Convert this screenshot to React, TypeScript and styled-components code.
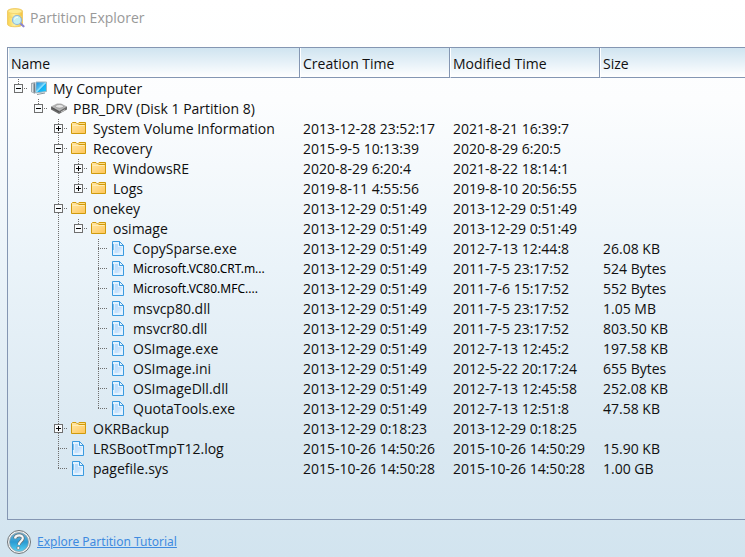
import React, { useState } from "react";
import styled, { createGlobalStyle } from "styled-components";

const GlobalStyle = createGlobalStyle`
  *, *::before, *::after { box-sizing: border-box; }
  body {
    margin: 0;
    background: #d3e5ef;
    font-family: "Open Sans", "Noto Sans", sans-serif;
    color: #101010;
  }
`;

const LINE = "#8496b2";
const DOT = "#6e6e6e";

const Page = styled.main`
  display: flex;
  flex-direction: column;
  min-height: 100vh;
  padding-left: 7px;
  background: linear-gradient(#ffffff 0%, #fcfdfe 18%, #eaf3f9 48%, #dbe9f2 78%, #d2e4ef 100%);
  overflow: hidden;
`;

const TitleBar = styled.header`
  display: flex;
  align-items: center;
  gap: 5px;
  height: 47px;
  padding-bottom: 11px;
`;

const Title = styled.h1`
  margin: 0;
  font-size: 14px;
  line-height: 20px;
  font-weight: 400;
  color: #999999;
`;

const Panel = styled.section`
  flex: 1;
  border: 1px solid ${LINE};
  border-right: 0;
`;

const Grid = styled.table`
  width: 100%;
  table-layout: fixed;
  border-collapse: separate;
  border-spacing: 0;
  font-size: 14px;
  line-height: 20px;
`;

const Column = styled.col<{ $width?: number }>`
  width: ${(p) => (p.$width ? `${p.$width}px` : "auto")};
`;

const HeadCell = styled.th`
  height: 30px;
  padding: 2px 0 0 2px;
  text-align: left;
  font-weight: 400;
  background: linear-gradient(#d0e4f0, #e6f1f8 50%, #ffffff);
  border-bottom: 1px solid ${LINE};
  border-left: 1px solid #ffffff;
  border-right: 1px solid ${LINE};

  &:last-child { border-right: 0; }
`;

const Body = styled.tbody`
  &::before {
    content: "";
    display: table-row;
    height: 1px;
  }
`;

const Cell = styled.td`
  height: 20px;
  padding: 0 0 0 3px;
  white-space: nowrap;
`;

const NameCell = styled.td`
  height: 20px;
  padding: 0;
`;

const NameLine = styled.div`
  display: flex;
  align-items: center;
  height: 20px;
  white-space: nowrap;
`;

const vertical = `repeating-linear-gradient(${DOT} 0 1px, transparent 1px 2px)`;
const horizontal = `repeating-linear-gradient(90deg, ${DOT} 0 1px, transparent 1px 2px)`;

const Guide = styled.span<{ $line: boolean }>`
  flex: none;
  width: 20px;
  height: 20px;
  background: ${(p) => (p.$line ? `${vertical} 10px 0 / 1px 20px no-repeat` : "none")};
`;

const Branch = styled.span<{ $last: boolean }>`
  display: flex;
  flex: none;
  justify-content: center;
  width: 20px;
  height: 20px;
  padding: 5px 0 6px 1px;
  background:
    ${vertical} 10px 0 / 1px ${(p) => (p.$last ? 10 : 20)}px no-repeat,
    ${horizontal} 10px 9px / 10px 1px no-repeat;
`;

const Toggle = styled.button`
  display: block;
  width: 9px;
  height: 9px;
  padding: 0;
  border: 0;
  background: none;
  cursor: pointer;

  svg { display: block; }
`;

const IconSlot = styled.span`
  display: flex;
  flex: none;
  justify-content: center;
  width: 22px;
  margin-right: 3px;
  padding-bottom: 2px;
`;

const Label = styled.span<{ $small?: boolean }>`
  font-size: ${(p) => (p.$small ? 12 : 14)}px;
  font-family: ${(p) => (p.$small ? `"Noto Sans", sans-serif` : "inherit")};
  color: ${(p) => (p.$small ? "#000000" : "inherit")};
`;

const Footer = styled.footer`
  display: flex;
  align-items: center;
  gap: 6px;
  height: 37px;
  padding-top: 6px;
`;

const TutorialLink = styled.a`
  font-family: "Noto Sans", sans-serif;
  font-size: 12px;
  line-height: 16px;
  color: #3f8be0;
`;

const DatabaseIcon = () => (
  <svg width="18" height="20" viewBox="0 0 18 20" aria-hidden="true">
    <defs>
      <linearGradient id="db" x1="0" x2="1">
        <stop offset="0" stopColor="#f8d04c" />
        <stop offset=".45" stopColor="#fdf0a0" />
        <stop offset="1" stopColor="#f3c13c" />
      </linearGradient>
    </defs>
    <path d="M.5 3.2C.5-.2 15.5-.2 15.5 3.2v13c0 3.4-15 3.4-15 0z" fill="url(#db)" stroke="#f1cc68" />
    <ellipse cx="8" cy="3.3" rx="7" ry="2.3" fill="#fdec96" stroke="#f2cf62" strokeWidth=".7" />
    <path d="M1 8c2 2 12 2 14 0" fill="none" stroke="#f4d46c" />
    <path d="m13 15 3.5 3.3" stroke="#8c86cf" strokeWidth="2.2" strokeLinecap="round" />
    <circle cx="10" cy="12" r="4.5" fill="#c5f0f2" stroke="#8fb6da" strokeWidth="1.2" />
    <path d="M7.5 11.5c.5-2 2-2.5 3.5-2.3" fill="none" stroke="#fff" />
  </svg>
);

const ComputerIcon = () => (
  <svg width="16" height="14" viewBox="0 0 16 14" aria-hidden="true">
    <defs>
      <linearGradient id="screen" x1="0" y1="0" x2="1" y2="1">
        <stop offset="0" stopColor="#1889d8" />
        <stop offset=".4" stopColor="#4cbcf2" />
        <stop offset=".5" stopColor="#9ae8ff" />
        <stop offset=".56" stopColor="#14b0f4" />
        <stop offset="1" stopColor="#17cdfc" />
      </linearGradient>
    </defs>
    <path d="M0 2 4 1v12l-4-2z" fill="#a3adb4" />
    <path d="M1.500 3v8" stroke="#d8dee1" />
    <path d="M3.500 2.500v9" stroke="#6f7d86" />
    <path d="M5 1h10.500v9.500L4.500 12z" fill="url(#screen)" stroke="#a5b4bd" />
    <path d="M6 13.500 14 12" stroke="#87949c" />
  </svg>
);

const DiskIcon = () => (
  <svg width="16" height="14" viewBox="0 0 16 14" aria-hidden="true">
    <path d="M0 5.500V8.500l8 4.500 8-4.500v-3z" fill="#6a6a6a" />
    <path d="M0 5.500 6 2.500h4l6 3L8.500 10z" fill="#b4b4b4" />
    <ellipse cx="8.500" cy="5.300" rx="4" ry="1.800" fill="#e6e6e6" stroke="#8a8a8a" strokeWidth=".6" />
    <path d="m1 6.800 7 4" stroke="#4f4f4f" />
    <path d="m10 11 4-2.200" stroke="#c8c8c8" />
  </svg>
);

const FolderIcon = () => (
  <svg width="16" height="14" viewBox="0 0 16 14" aria-hidden="true">
    <defs>
      <linearGradient id="folder" x1="0" y1="0" x2="1" y2="1">
        <stop offset="0" stopColor="#ffe9a8" />
        <stop offset=".5" stopColor="#ffd680" />
        <stop offset="1" stopColor="#ffc658" />
      </linearGradient>
    </defs>
    <path d="M.5 12.500v-10l1-1H5l1.500 1.500L8 1.500h6.500v11z" fill="url(#folder)" stroke="#cf9a0c" strokeLinejoin="round" />
    <path d="M8.500 2.500h5" stroke="#ffdf8c" />
    <path d="M7.500 3.500h6.500" stroke="#cf9a0c" />
    <path d="M1.500 4.500h12" stroke="#ffedb8" />
  </svg>
);

const FileIcon = () => (
  <svg width="14" height="15" viewBox="0 0 14 15" aria-hidden="true">
    <defs>
      <linearGradient id="file" x1="0" y1="0" x2="1" y2="1">
        <stop offset="0" stopColor="#b4dcfb" />
        <stop offset=".6" stopColor="#c6e1fc" />
        <stop offset="1" stopColor="#f2f9ff" />
      </linearGradient>
    </defs>
    <path d="M.5.5h7l4 4v10H.5z" fill="#e4f2ff" stroke="#3b9be0" />
    <path d="M3 3h3v3h4v6H2.500z" fill="url(#file)" />
    <path d="M7.500.5v4h4z" fill="#e9f5ff" stroke="#3b9be0" />
    <path d="M1 3v6" stroke="#2588d2" />
  </svg>
);

const HelpIcon = () => (
  <svg width="24" height="24" viewBox="0 0 24 24" aria-hidden="true">
    <defs>
      <linearGradient id="help" x1="0" y1="0" x2="0" y2="1">
        <stop offset="0" stopColor="#6fb4d8" />
        <stop offset=".5" stopColor="#2a9bd3" />
        <stop offset="1" stopColor="#58d2f4" />
      </linearGradient>
    </defs>
    <circle cx="12" cy="12" r="11.500" fill="#f1f3f4" stroke="#6e7478" />
    <circle cx="12" cy="12" r="9.500" fill="url(#help)" stroke="#8c989e" strokeWidth=".7" />
    <path d="M8 8.500C8.500 4.500 16.200 4.300 15.800 8.400c-.3 2.800-3.600 3-4 6.400" fill="none" stroke="#626b70" strokeWidth="3.600" />
    <path d="M8 8.500C8.500 4.500 16.200 4.300 15.800 8.400c-.3 2.800-3.600 3-4 6.400" fill="none" stroke="#f4f7f8" strokeWidth="2.200" />
    <circle cx="11.300" cy="18" r="1.500" fill="#f4f7f8" stroke="#626b70" strokeWidth=".6" />
  </svg>
);

const ToggleMark = ({ open }: { open: boolean }) => (
  <svg width="9" height="9" viewBox="0 0 9 9" shapeRendering="crispEdges" aria-hidden="true">
    <path d="M.5.5h8v8h-8z" fill="#f8fbfd" stroke="#6f6f6f" />
    <path d={open ? "M2 4.500h5" : "M2 4.500h5M4.500 2v5"} stroke="#000" />
  </svg>
);

type Kind = "computer" | "disk" | "folder" | "file";

interface Item {
  name: string;
  kind: Kind;
  created?: string;
  modified?: string;
  size?: string;
  small?: boolean;
  open?: boolean;
  children?: Item[];
}

const icons: Record<Kind, React.FC> = {
  computer: ComputerIcon,
  disk: DiskIcon,
  folder: FolderIcon,
  file: FileIcon,
};

const file = (name: string, created: string, modified: string, size: string, small = false): Item => ({
  name, kind: "file", created, modified, size, small,
});

const folder = (name: string, created: string, modified: string, children?: Item[]): Item => ({
  name, kind: "folder", created, modified, open: Boolean(children), children: children ?? [],
});

const STAMP = "2013-12-29 0:51:49";

const root: Item = {
  name: "My Computer",
  kind: "computer",
  open: true,
  children: [
    {
      name: "PBR_DRV (Disk 1 Partition 8)",
      kind: "disk",
      open: true,
      children: [
        folder("System Volume Information", "2013-12-28 23:52:17", "2021-8-21 16:39:7"),
        folder("Recovery", "2015-9-5 10:13:39", "2020-8-29 6:20:5", [
          folder("WindowsRE", "2020-8-29 6:20:4", "2021-8-22 18:14:1"),
          folder("Logs", "2019-8-11 4:55:56", "2019-8-10 20:56:55"),
        ]),
        folder("onekey", STAMP, STAMP, [
          folder("osimage", STAMP, STAMP, [
            file("CopySparse.exe", STAMP, "2012-7-13 12:44:8", "26.08 KB"),
            file("Microsoft.VC80.CRT.m...", STAMP, "2011-7-5 23:17:52", "524 Bytes", true),
            file("Microsoft.VC80.MFC....", STAMP, "2011-7-6 15:17:52", "552 Bytes", true),
            file("msvcp80.dll", STAMP, "2011-7-5 23:17:52", "1.05 MB"),
            file("msvcr80.dll", STAMP, "2011-7-5 23:17:52", "803.50 KB"),
            file("OSImage.exe", STAMP, "2012-7-13 12:45:2", "197.58 KB"),
            file("OSImage.ini", STAMP, "2012-5-22 20:17:24", "655 Bytes"),
            file("OSImageDll.dll", STAMP, "2012-7-13 12:45:58", "252.08 KB"),
            file("QuotaTools.exe", STAMP, "2012-7-13 12:51:8", "47.58 KB"),
          ]),
        ]),
        folder("OKRBackup", "2013-12-29 0:18:23", "2013-12-29 0:18:25"),
        file("LRSBootTmpT12.log", "2015-10-26 14:50:26", "2015-10-26 14:50:29", "15.90 KB"),
        file("pagefile.sys", "2015-10-26 14:50:28", "2015-10-26 14:50:28", "1.00 GB"),
      ],
    },
  ],
};

interface TreeRowProps {
  item: Item;
  guides: boolean[];
  last: boolean;
}

const TreeRow = ({ item, guides, last }: TreeRowProps) => {
  const [open, setOpen] = useState(Boolean(item.open));
  const Icon = icons[item.kind];
  const children = item.children ?? [];
  return (
    <>
      <tr>
        <NameCell>
          <NameLine>
            {guides.map((line, i) => (
              <Guide key={i} $line={line} />
            ))}
            <Branch $last={last}>
              {item.children && (
                <Toggle type="button" aria-expanded={open} aria-label={item.name} onClick={() => setOpen(!open)}>
                  <ToggleMark open={open} />
                </Toggle>
              )}
            </Branch>
            <IconSlot>
              <Icon />
            </IconSlot>
            <Label $small={item.small}>{item.name}</Label>
          </NameLine>
        </NameCell>
        <Cell>{item.created}</Cell>
        <Cell>{item.modified}</Cell>
        <Cell>{item.size}</Cell>
      </tr>
      {open &&
        children.map((child, i) => (
          <TreeRow key={child.name} item={child} guides={[...guides, !last]} last={i === children.length - 1} />
        ))}
    </>
  );
};

export default function App() {
  return (
    <>
      <GlobalStyle />
      <Page>
        <TitleBar>
          <DatabaseIcon />
          <Title>Partition Explorer</Title>
        </TitleBar>
        <Panel>
          <Grid>
            <colgroup>
              <Column $width={292} />
              <Column $width={150} />
              <Column $width={150} />
              <Column />
            </colgroup>
            <thead>
              <tr>
                <HeadCell scope="col">Name</HeadCell>
                <HeadCell scope="col">Creation Time</HeadCell>
                <HeadCell scope="col">Modified Time</HeadCell>
                <HeadCell scope="col">Size</HeadCell>
              </tr>
            </thead>
            <Body>
              <TreeRow item={root} guides={[]} last />
            </Body>
          </Grid>
        </Panel>
        <Footer>
          <HelpIcon />
          <TutorialLink href="#tutorial">Explore Partition Tutorial</TutorialLink>
        </Footer>
      </Page>
    </>
  );
}
